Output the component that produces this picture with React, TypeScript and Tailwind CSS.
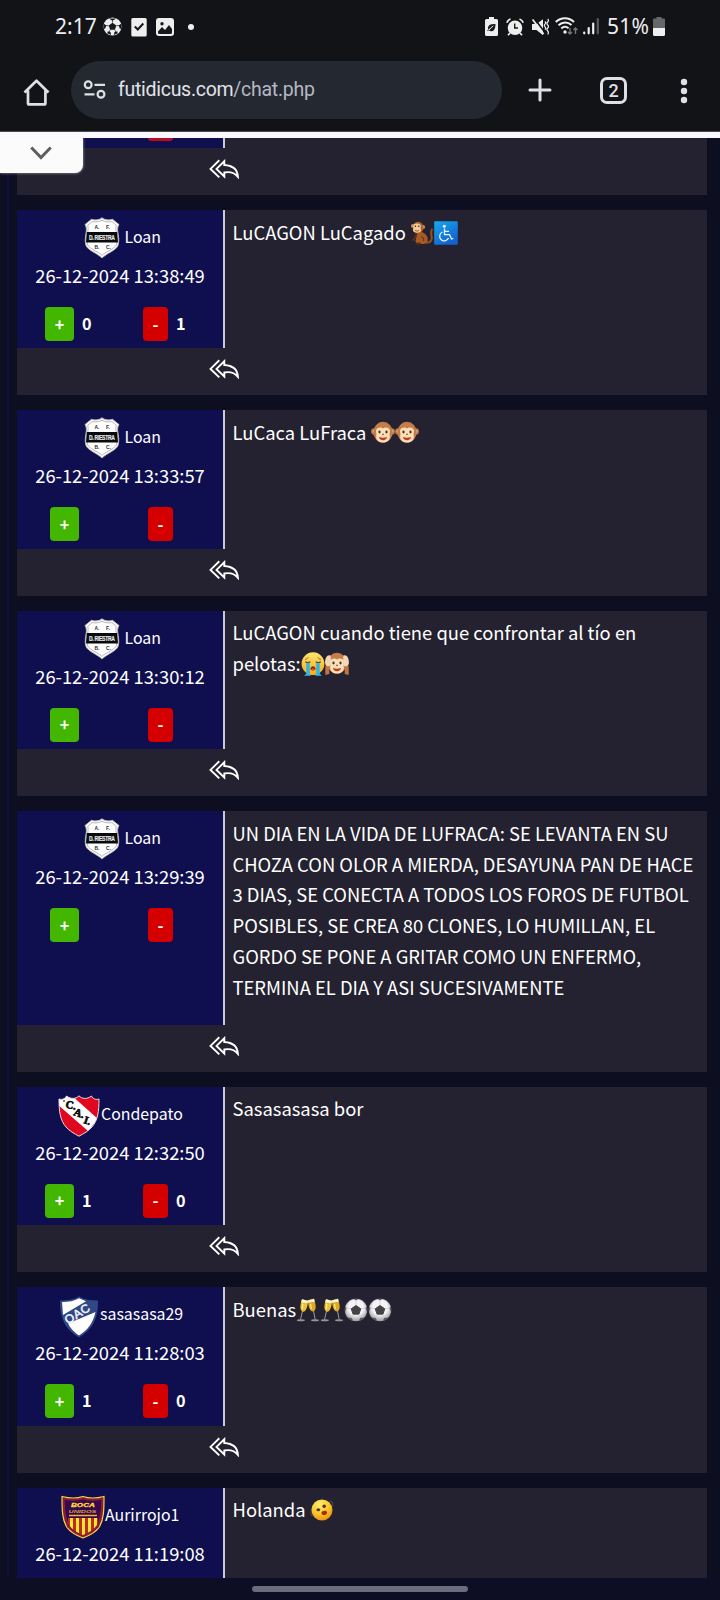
import React from "react";

type EmojiName = "monkey" | "wheelchair" | "monkeyFace" | "cry" | "hearNo" | "cheers" | "ball" | "turned";
type CrestName = "riestra" | "cai" | "qac" | "boca";

const E = ({ label, children }: { label: string; children: React.ReactNode }) => (
  <svg role="img" aria-label={label} viewBox="0 0 24 24" className="inline-block h-6 w-6 align-[-5px]">
    {children}
  </svg>
);

function Emoji({ name }: { name: EmojiName }) {
  switch (name) {
    case "monkey":
      return (
        <E label="🐒">
          <path d="M15 21c5 2 7.500-2 6.500-6-.8-3-.5-5 .4-6.500" fill="none" stroke="#95501f" strokeWidth="2" strokeLinecap="round" />
          <path d="M7 11c4-1 9 1 10.500 5.500.9 3-.5 6.500-4 6.500H8c-2.500-1-3-3-2-5z" fill="#a65a25" />
          <path d="M6.500 12 5 17l-2 2M10 22.500H7.500" fill="none" stroke="#5d2e12" strokeWidth="2" strokeLinecap="round" />
          <path d="M11 16c2 0 3 1.500 2.500 4" fill="none" stroke="#70381a" strokeWidth="1.200" />
          <circle cx="3" cy="5" r="2" fill="#d79a67" />
          <circle cx="13" cy="6" r="2" fill="#d79a67" />
          <ellipse cx="8" cy="6.500" rx="5.500" ry="5.700" fill="#ae642c" />
          <ellipse cx="7" cy="5.500" rx="3.900" ry="3" fill="#f3cb9a" />
          <ellipse cx="7" cy="9" rx="4" ry="2.700" fill="#f3cb9a" />
          <circle cx="5.400" cy="5.300" r=".8" fill="#3b2114" />
          <circle cx="8.800" cy="5.300" r=".8" fill="#3b2114" />
          <path d="M5 9.300c1.300 1 2.700 1 4 0" fill="none" stroke="#87401e" strokeWidth=".8" />
        </E>
      );
    case "wheelchair":
      return (
        <E label="♿">
          <defs>
            <linearGradient id="wheel" x1="0" y1="0" x2=".6" y2="1">
              <stop offset="0" stopColor="#19a7ee" />
              <stop offset="1" stopColor="#1261cf" />
            </linearGradient>
          </defs>
          <rect x=".2" y=".2" width="23.600" height="23.600" rx="1" fill="url(#wheel)" />
          <circle cx="10.300" cy="5.300" r="1.500" fill="#e5f3ff" />
          <path d="M10.500 7.500v6.200h5l2 4.300 1.800-.7M10.700 10.300h4.300M8.500 11a4.600 4.600 0 1 0 6 6" fill="none" stroke="#e5f3ff" strokeWidth="1.300" />
        </E>
      );
    case "monkeyFace":
    case "hearNo":
      return (
        <E label={name === "hearNo" ? "🙉" : "🐵"}>
          <circle cx="3.300" cy="10.500" r="3.200" fill="#c07a49" />
          <circle cx="20.700" cy="10.500" r="3.200" fill="#c07a49" />
          <circle cx="3.500" cy="10.500" r="1.900" fill="#e9b890" />
          <circle cx="20.500" cy="10.500" r="1.900" fill="#e9b890" />
          <ellipse cx="12" cy="11.300" rx="9.700" ry="10.500" fill="#c47d48" />
          <path d="M12 7.500c2.200-2 7-1 7 2.700 0 1.500-.5 2.300-.5 3 1.500 5-1.700 8.300-6.500 8.300s-8-3.300-6.500-8.300c0-.7-.5-1.500-.5-3 0-3.700 4.800-4.700 7-2.700z" fill="#fadfb9" />
          <ellipse cx="8.500" cy="11" rx="1.100" ry="1.400" fill="#4a2b18" />
          <ellipse cx="15.500" cy="11" rx="1.100" ry="1.400" fill="#4a2b18" />
          <path d="M11 13.300h2" stroke="#73452c" strokeWidth=".9" />
          <path d="M8 16c2.600.9 5.400.9 8 0-.2 4.200-7.800 4.200-8 0z" fill="#c63618" />
          {name === "hearNo" && (
            <g>
              <path d="M.3 23V15c0-2 1.500-3 4-3v10zM23.700 23V15c0-2-1.500-3-4-3v10z" fill="#c07545" />
              <path d="M5.600 3.500C2 2.500 0 6 .2 11c.2 4 5.300 4.500 5.900 1zM18.400 3.500C22 2.500 24 6 23.800 11c-.2 4-5.300 4.500-5.900 1z" fill="#f4d7b6" />
            </g>
          )}
        </E>
      );
    case "cry":
      return (
        <E label="😭">
          <defs>
            <linearGradient id="cry" x1="0" y1="0" x2="0" y2="1">
              <stop offset="0" stopColor="#ffe670" />
              <stop offset="1" stopColor="#f4ac1c" />
            </linearGradient>
          </defs>
          <circle cx="12" cy="11.700" r="11.400" fill="url(#cry)" />
          <path d="M4 7.300c1 .2 2.600-.7 3.200-2M20 7.300c-1 .2-2.600-.7-3.200-2" fill="none" stroke="#8c5a14" strokeWidth=".9" />
          <path d="M4.300 9.700c1.600 1 3.600 1 5 0M14.700 9.700c1.600 1 3.600 1 5 0" fill="none" stroke="#5d3411" strokeWidth="1.100" />
          <path d="M5.300 10.700h3.500V22l1 1.700H3.200l2.100-2.200zM15.200 10.700h3.500v10.800l2.100 2.200h-6.600l1-1.700z" fill="#35b4e4" />
          <path d="M9.500 17.300c0-4 5-4 5 0 0 1.500-5 1.500-5 0z" fill="#7b2c12" />
          <path d="M10 17.300c1-1.300 3-1.300 4 0-.8.900-3.200.9-4 0z" fill="#e65435" />
        </E>
      );
    case "cheers":
      return (
        <E label="🥂">
          <path d="m6.500 13-2 8.500M17.500 13l1.700 8.500" stroke="#9b9b98" strokeWidth="1" />
          <ellipse cx="4.800" cy="22.200" rx="4" ry="1" fill="#96969a" />
          <ellipse cx="19" cy="22.200" rx="4" ry="1" fill="#96969a" />
          <path d="m6 1.200 6 1.500c-.2 4.500-1.200 10-4.500 11C3.500 13.500 3.800 7 6 1.200z" fill="#edc037" />
          <path d="m18 .7-6 1.500c0 4.500 1.200 10.300 4.500 11.300 4.500-.5 3.500-7 1.500-12.800z" fill="#dfa820" />
          <path d="m6 1.200 6 1.500-.3 2.500-6.700-1zM18 .7l-6 1.500.2 2.500 6.600-1z" fill="#f7f2cf" />
          <path d="m7 6-.9 5M14.500 6l.8 5" stroke="#fff09b" strokeWidth="1.200" />
        </E>
      );
    case "ball":
      return (
        <E label="⚽">
          <defs>
            <radialGradient id="ball" cx=".5" cy=".4" r=".6">
              <stop offset=".55" stopColor="#f5f3f5" />
              <stop offset="1" stopColor="#9c999f" />
            </radialGradient>
            <clipPath id="ballClip"><circle cx="12" cy="12" r="11.200" /></clipPath>
          </defs>
          <circle cx="12" cy="12" r="11.200" fill="url(#ball)" />
          <g clipPath="url(#ballClip)">
            <path d="m12 7.500 4.800 3.300-1.900 5.400H9.100l-1.900-5.400z" fill="#444347" stroke="#444347" strokeLinejoin="round" />
            <path d="M8 0h8l-4 2.500zM0 7l2.500 3L.5 16H-1zM24 7l-2.500 3 2 6h1.500zM4 19.500l4 .5 1 4H4zM20 19.500l-4 .5-1 4h5z" fill="#59565e" />
            <path d="M12 2.500v4.500M2.500 10l4.500.6M21.500 10l-4.500.6M8 20l1-3.600M16 20l-1-3.600" stroke="#cbc8ce" strokeWidth=".7" />
          </g>
        </E>
      );
    default:
      return (
        <E label="🫨">
          <defs>
            <radialGradient id="face" cx=".4" cy=".25" r=".8">
              <stop offset="0" stopColor="#ffed72" />
              <stop offset=".55" stopColor="#fcc62c" />
              <stop offset="1" stopColor="#e98b10" />
            </radialGradient>
          </defs>
          <path d="M2.500 10C.5 13 .5 16 2.500 18M19.500 3c3 .2 3.800 2.500 3 5.500" fill="none" stroke="#46444c" strokeWidth="1.200" />
          <circle cx="12" cy="12" r="10.500" fill="url(#face)" />
          <ellipse cx="8.300" cy="11.700" rx="1.900" ry="1.500" fill="#593112" />
          <ellipse cx="14.200" cy="8.300" rx="1.800" ry="1.800" fill="#593112" />
          <path d="M11.500 15c0-2.500 5.500-3.200 5.500-.3 0 2.800-5.500 3.300-5.500.3z" fill="#a52c0d" />
        </E>
      );
  }
}

function Crest({ name }: { name: CrestName }) {
  if (name === "riestra")
    return (
      <svg viewBox="0 0 36 42" className="mt-[7px] h-[42px] w-9 shrink-0 overflow-visible">
        <path d="M18 .8c2.500 2.200 7 2.700 10.500 1.500L35 7.500c-2 3-1.500 6-.8 10 .7 4 .8 8-.2 11-2 5-11 7.500-16 12.500C13 36 4 33.500 2 28.500c-1-3-.9-7-.2-11C2.500 13.500 3 10.500 1 7.500l6.500-5.200C11 3.500 15.500 3 18 .8z" fill="#fff" stroke="#b5b5bd" strokeWidth="1" />
        <path d="M18 3.300c3 1.600 6.500 2 9.800 1.300l4.500 3.600c-1.500 4 1.700 12 .1 19.500C30.500 32 22 34.500 18 38.300 14 34.500 5.500 32 3.600 27.700 2 20.200 5.200 12.200 3.700 8.200l4.500-3.600c3.300.7 6.800.3 9.800-1.300z" fill="none" stroke="#88888c" strokeWidth=".6" />
        <path d="M2.800 15h30.400l.8 10.500H2z" fill="#090a0b" />
        <g fontFamily="Liberation Sans Narrow, Liberation Sans, sans-serif" fontWeight="700">
          <text transform="translate(5 22.700) scale(.77 1)" fontSize="6.500" letterSpacing="-.35" fill="#e7e7e7" stroke="#e7e7e7" strokeWidth=".2">D. RIESTRA</text>
          <g fontSize="5" fill="#303033">
            <text x="10.500" y="12">A.</text><text x="22" y="12">F.</text>
            <text x="10.500" y="32">B.</text><text x="22" y="32">C.</text>
          </g>
        </g>
      </svg>
    );
  if (name === "cai")
    return (
      <svg viewBox="0 0 42 42" className="mt-2 h-[42px] w-[42px] shrink-0 overflow-visible">
        <defs><clipPath id="cai"><path d="M1 4c3 1 6 0 7.500-3C13 4.500 18 4 21 .8 24 4 29 4.500 33.500 1 35 4 38 5 41 4c0 12-1 21-7 28-3.500 4-8 6.500-13 9.200C16 38.500 11.500 36 8 32 2 25 1 16 1 4z" /></clipPath></defs>
        <g clipPath="url(#cai)">
          <path d="M0 0h42v42H0z" fill="#df0820" />
          <path d="M-2 4 12-1l28 25-10 12L-2 8z" fill="#fff" />
        </g>
        <path d="M1 4c3 1 6 0 7.500-3C13 4.500 18 4 21 .8 24 4 29 4.500 33.500 1 35 4 38 5 41 4c0 12-1 21-7 28-3.500 4-8 6.500-13 9.200C16 38.500 11.500 36 8 32 2 25 1 16 1 4z" fill="none" stroke="#e9dce4" strokeWidth="1" />
        <g fontFamily="Liberation Serif, serif" fontWeight="700" fontSize="11" fill="#080808" stroke="#080808" strokeWidth=".6">
          <text transform="translate(7 12.500) rotate(12)">C.</text>
          <text transform="translate(15 20) rotate(18)">A.</text>
          <text transform="translate(25 28) rotate(18)">I.</text>
          <circle cx="6" cy="6" r=".5" />
        </g>
      </svg>
    );
  if (name === "qac")
    return (
      <svg viewBox="0 0 40 42" className="mt-[9px] h-[42px] w-10 shrink-0 overflow-visible">
        <defs><clipPath id="qac"><path d="M1 4.500c7 0 14-1 19-4 5 3 12 4 19 4 .5 17-5 29-19 37C6 33.500.5 21.500 1 4.500z" /></clipPath></defs>
        <g clipPath="url(#qac)">
          <path d="M0 0h40v42H0z" fill="#314886" />
          <path d="M3 6c7 0 12-1 17-3.800l7 3L4 19zM36.500 16C34 27 29 34 20 39.500 15 36 12 33 9 27.500z" fill="#fff" />
        </g>
        <text transform="translate(8.800 28.500) rotate(-32)" fontFamily="Liberation Sans, sans-serif" fontSize="12" letterSpacing=".6" fill="#f4f5fa" stroke="#f4f5fa" strokeWidth=".5">QAC</text>
      </svg>
    );
  return (
    <svg viewBox="0 0 44 44" className="mt-[7px] h-11 w-11 shrink-0 overflow-visible">
      <defs><clipPath id="boca"><path d="M1 1.500c8 2 15 2 21 0 6 2 13 2 21 0 0 13 0 23-5 31-4 5.500-9.500 8-16 10.500C15.500 40.500 10 38 6 32.500 1 24.500 1 14.500 1 1.500z" /></clipPath></defs>
      <g clipPath="url(#boca)">
        <path d="M0 0h44v44H0z" fill="#35084f" />
        <path d="M7 23h30v21H7z" fill="#b92e24" />
        <path d="M9 23h3v21H9zM15 23h3v21h-3zM21 23h3v21h-3zM27 23h3v21h-3zM33 23h3v21h-3z" fill="#ffe431" />
        <path d="M8 20.500h28" stroke="#f5b036" strokeWidth="1.300" />
      </g>
      <path d="M2.500 3.500c7 1.500 14 1.500 19.500-.5 5.500 2 12.500 2 19.500.5 0 12-.5 21-5 28-3.500 5-8.500 7.500-14.500 10-6-2.500-11-5-14.500-10-4.500-7-5-16-5-28z" fill="none" stroke="#8c1c35" strokeWidth="2.500" />
      <path d="M1 1.500c8 2 15 2 21 0 6 2 13 2 21 0 0 13 0 23-5 31-4 5.500-9.500 8-16 10.500C15.500 40.500 10 38 6 32.500 1 24.500 1 14.500 1 1.500z" fill="none" stroke="#f6d541" strokeWidth="1.200" />
      <g fontFamily="Liberation Sans, sans-serif" fontWeight="700" fontStyle="italic" fill="#ffdb2c">
        <text transform="translate(10 12) scale(1.400 1)" fontSize="5.800" stroke="#ffdb2c" strokeWidth=".3">BOCA</text>
        <text transform="translate(7.500 17.700) scale(1.700 1)" fontSize="4.200" fill="#dba33d">UNIDOS</text>
      </g>
    </svg>
  );
}

const ReplyAll = () => (
  <svg viewBox="0 0 30 20" className="h-5 w-[30px]" fill="none" stroke="#fff" strokeWidth="1.900">
    <path d="M10.300 1.200 1.500 9.900l8.800 8.500" />
    <path d="M15.300 2.200 7.500 9.900l7.800 7.500v-3.900c5.500-1 10.300.3 13.600 4.300C28.500 10.500 23.500 6.500 15.300 6z" />
  </svg>
);

type Line = { text: string; emoji?: EmojiName[] };
type Message = {
  user: string;
  crest: CrestName;
  date: string;
  votes?: [number, number];
  lines: Line[];
  nameClass: string;
  size: string;
};

const loan = "pl-[67px] gap-[4.500px]";
const normal = "h-[185.400px]";

const messages: Message[] = [
  { user: "Loan", crest: "riestra", date: "26-12-2024 13:38:49", votes: [0, 1], lines: [{ text: "LuCAGON LuCagado ", emoji: ["monkey", "wheelchair"] }], nameClass: loan, size: normal },
  { user: "Loan", crest: "riestra", date: "26-12-2024 13:33:57", lines: [{ text: "LuCaca LuFraca ", emoji: ["monkeyFace", "monkeyFace"] }], nameClass: loan, size: normal },
  { user: "Loan", crest: "riestra", date: "26-12-2024 13:30:12", lines: [{ text: "LuCAGON cuando tiene que confrontar al tío en" }, { text: "pelotas:", emoji: ["cry", "hearNo"] }], nameClass: loan, size: normal },
  {
    user: "Loan", crest: "riestra", date: "26-12-2024 13:29:39", nameClass: loan, size: "h-[260.700px]",
    lines: [
      { text: "UN DIA EN LA VIDA DE LUFRACA: SE LEVANTA EN SU" },
      { text: "CHOZA CON OLOR A MIERDA, DESAYUNA PAN DE HACE" },
      { text: "3 DIAS, SE CONECTA A TODOS LOS FOROS DE FUTBOL" },
      { text: "POSIBLES, SE CREA 80 CLONES, LO HUMILLAN, EL" },
      { text: "GORDO SE PONE A GRITAR COMO UN ENFERMO," },
      { text: "TERMINA EL DIA Y ASI SUCESIVAMENTE" },
    ],
  },
  { user: "Condepato", crest: "cai", date: "26-12-2024 12:32:50", votes: [1, 0], lines: [{ text: "Sasasasasa bor" }], nameClass: "pl-[41px] gap-[1px]", size: normal },
  { user: "sasasasa29", crest: "qac", date: "26-12-2024 11:28:03", votes: [1, 0], lines: [{ text: "Buenas", emoji: ["cheers", "cheers", "ball", "ball"] }], nameClass: "pl-[42px] gap-[1px]", size: normal },
  { user: "Aurirrojo1", crest: "boca", date: "26-12-2024 11:19:08", lines: [{ text: "Holanda ", emoji: ["turned"] }], nameClass: "pl-[44px]", size: normal },
];

function Card({ m }: { m: Message }) {
  return (
    <article className={`flex shrink-0 flex-col bg-[#242230] ${m.size}`}>
      <div className="flex min-h-0 flex-1">
        <div className="w-[208px] shrink-0 border-r-2 border-[#c9c8dc] bg-[#0f0f50]">
          <div className={`flex h-[51px] ${m.nameClass}`}>
            <Crest name={m.crest} />
            <span className="mt-[13px] whitespace-nowrap text-[15.900px] leading-7">{m.user}</span>
          </div>
          <div className="flex h-7 justify-center whitespace-nowrap text-[18.350px] leading-7">{m.date}</div>
          <div className={`mt-[18px] flex text-[16.200px] font-bold leading-[33px] ${m.votes ? "pl-7" : "pl-[33px]"}`}>
            <div className="flex w-[98px] gap-2">
              <button className="h-[34px] w-[29px] rounded bg-[#43b700] text-center">+</button>
              <span>{m.votes?.[0]}</span>
            </div>
            <div className="flex w-[70px] gap-2">
              <button className="h-[34px] w-[25px] rounded bg-[#d40000] text-center">-</button>
              <span>{m.votes?.[1]}</span>
            </div>
          </div>
        </div>
        <div className="flex-1 whitespace-pre pl-[7.500px] pt-[6.500px] text-[18.400px] leading-[30.900px]">
          {m.lines.map((l, i) => (
            <div key={i} className="h-[30.900px]">
              {l.text}
              {l.emoji?.map((e, j) => <Emoji key={j} name={e} />)}
            </div>
          ))}
        </div>
      </div>
      <footer className="h-[47px] shrink-0 pl-[192px] pt-[11px]"><ReplyAll /></footer>
    </article>
  );
}

const StatusBar = () => (
  <div className="flex h-[53px] items-center pl-[55px] pr-[55px] font-['Noto_Sans',sans-serif] text-[21px] text-[#eeeef1]">
    <span className="w-[41px] whitespace-nowrap leading-none">2:17</span>
    <svg viewBox="0 0 20 20" className="ml-[7px] h-[19px] w-[19px]">
      <circle cx="10" cy="10" r="9.500" fill="#eee" />
      <path d="m10 6 4 3-1.500 4.500h-5L6 9zM6 1.500h8L10 4zM1 7l2.500 2L2 13 .5 11zM19 7l-2.500 2 1.500 4 1.500-2zM5 15l3 1 .5 3-4-2zM15 15l-3 1-.5 3 4-2z" fill="#17181b" />
      <path d="M10 3.500V6M3 9l3 .2M17 9l-3 .2M7.500 13.500 6.500 16M12.500 13.500l1 2.500" stroke="#17181b" strokeWidth=".7" />
    </svg>
    <svg viewBox="0 0 16 20" className="ml-[9px] h-5 w-4">
      <rect x=".3" y="1" width="15.400" height="18.500" rx="1.500" fill="#eee" />
      <path d="m3.800 9.500 3 3 5.500-6" fill="none" stroke="#17181b" strokeWidth="2" />
    </svg>
    <svg viewBox="0 0 18 18" className="ml-[9px] h-[18px] w-[18px]">
      <rect width="18" height="18" rx="3" fill="#eee" />
      <path d="M2 13.500 6 9l3 3 4-5 3 4v3.500a1.500 1.500 0 0 1-1.500 1.500h-11A1.500 1.500 0 0 1 2 14.500z" fill="#17181b" />
      <circle cx="6" cy="5.700" r="1.700" fill="#17181b" />
    </svg>
    <span className="ml-[14px] h-1.5 w-1.5 rounded-full bg-[#eee]" />
    <svg viewBox="0 0 13 19" className="ml-auto h-[19px] w-[13px]">
      <path d="M4 0h5v2h2.500A1.500 1.500 0 0 1 13 3.500v14a1.500 1.500 0 0 1-1.500 1.500h-10A1.500 1.500 0 0 1 0 17.500v-14A1.500 1.500 0 0 1 1.500 2H4z" fill="#eee" />
      <path d="M10.500 7C5 7 3 8.500 3 11.200c0 1 .3 1.600.8 2.200-.6.500-1.300.6-2 .6M3.800 13.400C6 15 10.500 15 10.500 7" fill="#17181b" />
      <path d="M4 13.300c1-2 2-3 4-4" stroke="#eee" strokeWidth=".8" fill="none" />
    </svg>
    <svg viewBox="0 0 18 18" className="ml-2 h-[18px] w-[18px]">
      <circle cx="9" cy="9.800" r="7.300" fill="#eee" />
      <path d="M.8 4.800C1.300 3 2.500 1.700 4.500 1M17.200 4.800C16.700 3 15.500 1.700 13.500 1M4 15l-2 2.300M14 15l2 2.300" stroke="#eee" strokeWidth="1.700" fill="none" />
      <path d="M8.700 5.500V10H12" fill="none" stroke="#17181b" strokeWidth="1.400" />
    </svg>
    <svg viewBox="0 0 18 18" className="ml-[7px] h-[18px] w-[18px]">
      <path d="M1 6h4.500L12 1.200v16L5.500 12H1z" fill="#eee" />
      <path d="m3.300.3 10 13.500" stroke="#121316" strokeWidth="1.600" />
      <path d="m1.600 1.500 11 14.500" stroke="#eee" strokeWidth="1.700" />
      <path d="M14 3.500c1 1 1 1.700 0 2.700s-1 1.700 0 2.700 1 1.700 0 2.700M16.700 1c1 1 1 2 0 3s-1 2 0 3 1 2 0 3-1 2 0 3 1 2 0 3.500" fill="none" stroke="#eee" strokeWidth="1.200" />
    </svg>
    <svg viewBox="0 0 23 19" className="ml-[6px] h-[19px] w-[23px]" fill="none">
      <path d="M.8 5C6-.2 14 0 19 5M3.500 8.300C7.500 4.500 13 4.700 16.500 8M6.300 11.500c2-2 5-2.200 7.300-.3" stroke="#eee" strokeWidth="2" />
      <circle cx="10" cy="15" r="1.700" fill="#eee" />
      <path d="M15 11v6m-2-2 2 2 2-2M20.500 17v-6m-2 2 2-2 2 2" stroke="#77777a" strokeWidth="1.400" />
    </svg>
    <svg viewBox="0 0 16 17" className="ml-[5px] h-[17px] w-4" strokeWidth="2.200" strokeLinecap="round">
      <path d="M1.200 14.500v.8M5.700 10v5.300M10.200 5.500v9.800" stroke="#eee" />
      <path d="M14.800 1.200v14.100" stroke="#5a5b5e" />
    </svg>
    <span className="ml-2 w-[46px] whitespace-nowrap leading-none tracking-[0.200px]">51%</span>
    <svg viewBox="0 0 12 19" className="h-[19px] w-3">
      <path d="M3.500 0h5v1.500H11a1 1 0 0 1 1 1V11H0V2.500a1 1 0 0 1 1-1h2.500z" fill="#67676a" />
      <path d="M0 11h12v6.500a1.500 1.500 0 0 1-1.500 1.500h-9A1.500 1.500 0 0 1 0 17.500z" fill="#eee" />
    </svg>
  </div>
);

const Toolbar = () => (
  <div className="flex h-[78px] items-center">
    <svg viewBox="0 0 27 27" className="ml-[22.500px] h-[27px] w-[27px]" fill="none" stroke="#dfdfe6" strokeWidth="2.700" strokeLinejoin="round">
      <path d="M1.500 13.500 13.500 1.800l12 11.700M5 11.500v12.700c0 .7.500 1.200 1.200 1.200h15c.7 0 1.200-.5 1.200-1.200V11.500" />
    </svg>
    <div className="mb-1 ml-[21.500px] flex h-[58px] w-[431px] items-center rounded-full bg-[#242931] pl-3">
      <svg viewBox="0 0 24 20" className="h-5 w-6" fill="none" stroke="#dfdfe6" strokeWidth="2.200">
        <circle cx="5.200" cy="4.800" r="3.400" /><path d="M11.500 4.800H22M1.500 14.300h10" /><circle cx="18" cy="14.300" r="3.400" />
      </svg>
      <span className="ml-[11px] whitespace-nowrap font-[Roboto,sans-serif] text-[19.500px] tracking-[-0.280px] text-[#e2e3eb]">futidicus.com<span className="text-[#b5b7c4]">/chat.php</span></span>
    </div>
    <svg viewBox="0 0 24 24" className="mb-1 ml-[26px] h-6 w-6" stroke="#dfdfe6" strokeWidth="3" strokeLinecap="round"><path d="M12 2v20M2 12h20" /></svg>
    <div className="mb-[3px] ml-12 flex h-[27px] w-[27px] items-center justify-center rounded-[7px] border-[3px] border-[#dfdfe6] font-[Roboto,sans-serif] text-[18px] font-medium leading-none text-[#dfdfe6]">2</div>
    <svg viewBox="0 0 8 26" className="mb-[3px] ml-[53px] h-[26px] w-2" fill="#dfdfe6"><circle cx="4" cy="4" r="3.200" /><circle cx="4" cy="13" r="3.200" /><circle cx="4" cy="22" r="3.200" /></svg>
  </div>
);

export default function App() {
  return (
    <div className="flex h-[1600px] w-[720px] flex-col overflow-hidden bg-[#121316] font-['Noto_Sans_CJK_SC','Noto_Sans',sans-serif] text-white">
      <StatusBar />
      <Toolbar />
      <div className="h-px bg-[#4c4a50]" />
      <div className="h-[6px] shrink-0 bg-[#f9f7ff]" />
      <main className="relative flex h-[1440px] shrink-0 overflow-hidden bg-[#0d0e20]">
        <div className="ml-[7px] w-0.5 bg-[#0f0f43]" />
        <div className="ml-2 flex w-[690px] flex-col gap-[15px]">
          <div className="flex h-[57px] shrink-0 flex-col bg-[#242230]">
            <div className="flex h-[10px] w-[208px] border-r-2 border-[#c9c8dc] bg-[#0f0f50] pl-[131px]">
              <div className="h-[3px] w-[25px] rounded-b bg-[#b90b20]" />
            </div>
            <div className="pl-[192px] pt-[11px]"><ReplyAll /></div>
          </div>
          {messages.map((m) => <Card key={m.date} m={m} />)}
        </div>
        <div className="absolute left-0 top-0 flex h-[35px] w-[83px] items-center justify-center rounded-br-lg bg-[#fbfbfb] pb-1.5 pr-0.5 shadow-[0_0_3px_#aaa]">
          <svg viewBox="0 0 22 14" className="h-[14px] w-[22px]" fill="none" stroke="#5e5e5e" strokeWidth="3"><path d="m1.300 1.500 9.700 10 9.700-10" /></svg>
        </div>
      </main>
      <div className="flex h-[22px] justify-center bg-[#0d0d24] pt-2"><div className="h-1.5 w-[216px] rounded-full bg-[#6c6a7d]" /></div>
    </div>
  );
}
